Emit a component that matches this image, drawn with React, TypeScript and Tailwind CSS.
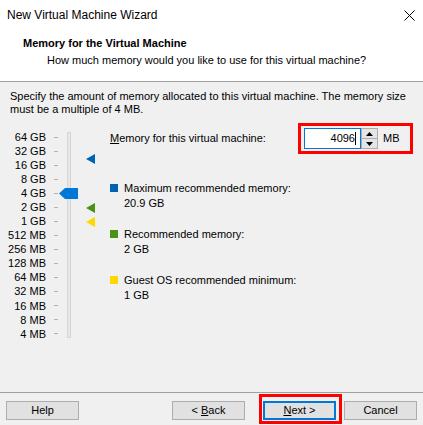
const labels = [
  "64 GB",
  "32 GB",
  "16 GB",
  "8 GB",
  "4 GB",
  "2 GB",
  "1 GB",
  "512 MB",
  "256 MB",
  "128 MB",
  "64 MB",
  "32 MB",
  "16 MB",
  "8 MB",
  "4 MB",
];

const Marker = ({ color, top }: { color: string; top: string }) => (
  <svg className={`absolute left-[86px] ${top}`} width="10" height="10" viewBox="0 0 10 10">
    <polygon points="0,5 9,0 9,10" fill={color} />
  </svg>
);

const Legend = ({ color, title, value }: { color: string; title: string; value: string }) => (
  <div className="flex items-start gap-[6px]">
    <div className={`w-[8px] h-[8px] mt-[3px] ${color}`}></div>
    <div className="leading-[15px]">
      <div>{title}</div>
      <div>{value}</div>
    </div>
  </div>
);

const Button = ({ children, primary }: { children: React.ReactNode; primary?: boolean }) => (
  <div
    className={`w-[73px] h-[19px] flex items-center justify-center bg-[#e1e1e1] text-[11px] ${
      primary ? "border-2 border-[#0078d7]" : "border border-[#adadad]"
    }`}
  >
    {children}
  </div>
);

export default function App() {
  return (
    <div className="w-[423px] h-[425px] bg-[#f0f0f0] flex flex-col font-['Liberation_Sans',_sans-serif] text-[11px] text-black overflow-hidden">
      {/* title bar */}
      <div className="h-[30px] bg-white flex items-center justify-between pl-[7px] pr-[8px]">
        <span className="text-[12px]">New Virtual Machine Wizard</span>
        <svg width="11" height="11" viewBox="0 0 11 11" className="mt-[1px]">
          <path d="M0.5 0.5 L10.5 10.5 M10.5 0.5 L0.5 10.5" stroke="#000" strokeWidth="1" />
        </svg>
      </div>

      {/* header */}
      <div className="h-[52px] bg-white border-b border-[#a0a0a0] pt-[6px]">
        <div className="pl-[23px] font-bold text-[11px] leading-[14px]">Memory for the Virtual Machine</div>
        <div className="pl-[47px] leading-[14px] mt-[3px]">
          How much memory would you like to use for this virtual machine?
        </div>
      </div>

      {/* body */}
      <div className="px-[10px] pt-[8px] leading-[13px]">
        Specify the amount of memory allocated to this virtual machine. The memory size
        <br />
        must be a multiple of 4 MB.
      </div>

      <div className="flex mt-[14px] h-[212px]">
        {/* slider */}
        <div className="relative w-[100px] h-full">
          <div className="absolute left-0 top-0 flex flex-col">
            {labels.map((l) => (
              <div key={l} className="h-[14.07px] flex items-center">
                <span className="w-[46px] text-right">{l}</span>
                <span className="ml-[8px] w-[4px] h-px bg-[#b4b4b4]"></span>
              </div>
            ))}
          </div>
          <div className="absolute left-[67px] top-[2px] w-[4px] h-[206px] border border-[#d6d6d6] bg-[#e7e7e7]"></div>
          <svg className="absolute left-[59px] top-[58px]" width="19" height="11" viewBox="0 0 19 11">
            <polygon points="0,5.5 6,0 19,0 19,11 6,11" fill="#0078d7" />
          </svg>
          <Marker color="#0063b1" top="top-[24px]" />
          <Marker color="#4b9113" top="top-[73px]" />
          <Marker color="#ffd800" top="top-[87px]" />
        </div>

        {/* right panel */}
        <div className="flex-1 pl-[10px] flex flex-col">
          <div className="relative flex items-center h-[21px] -mt-[2px]">
            <span className="w-[194px]">
              <span className="underline">M</span>emory for this virtual machine:
            </span>
            <div className="absolute left-[188px] top-[-5px] w-[115px] h-[31px] border-[3px] border-[#ff0000]"></div>
            <div className="w-[57px] h-[21px] bg-white border border-[#0078d7] flex items-center justify-end pr-[4px]">
              4096<span className="w-px h-[13px] bg-black"></span>
            </div>
            <div className="w-[17px] h-[21px] flex flex-col">
              <div className="flex-1 bg-[#e5e5e5] border border-[#adadad] flex items-center justify-center">
                <svg width="7" height="4" viewBox="0 0 7 4"><polygon points="3.5,0 7,4 0,4" fill="#000" /></svg>
              </div>
              <div className="flex-1 bg-[#e5e5e5] border border-t-0 border-[#adadad] flex items-center justify-center">
                <svg width="7" height="4" viewBox="0 0 7 4"><polygon points="0,0 7,0 3.5,4" fill="#000" /></svg>
              </div>
            </div>
            <span className="ml-[5px]">MB</span>
          </div>

          <div className="flex flex-col gap-[16px] mt-[32px]">
            <Legend color="bg-[#0063b1]" title="Maximum recommended memory:" value="20.9 GB" />
            <Legend color="bg-[#4b9113]" title="Recommended memory:" value="2 GB" />
            <Legend color="bg-[#ffd800]" title="Guest OS recommended minimum:" value="1 GB" />
          </div>
        </div>
      </div>

      {/* footer */}
      <div className="mt-auto border-t border-[#a0a0a0] h-[33px] flex items-start pt-[8px] px-[6px]">
        <Button>Help</Button>
        <div className="ml-auto flex">
          <Button>
            &lt; <span className="underline ml-[3px]">B</span>ack
          </Button>
          <div className="relative ml-[18px]">
            <div className="absolute -left-[4px] -top-[7px] w-[83px] h-[30px] border-[3px] border-[#ff0000]"></div>
            <Button primary>
              <span className="underline">N</span>ext &gt;
            </Button>
          </div>
          <div className="ml-[8px]">
            <Button>Cancel</Button>
          </div>
        </div>
      </div>
    </div>
  );
}
